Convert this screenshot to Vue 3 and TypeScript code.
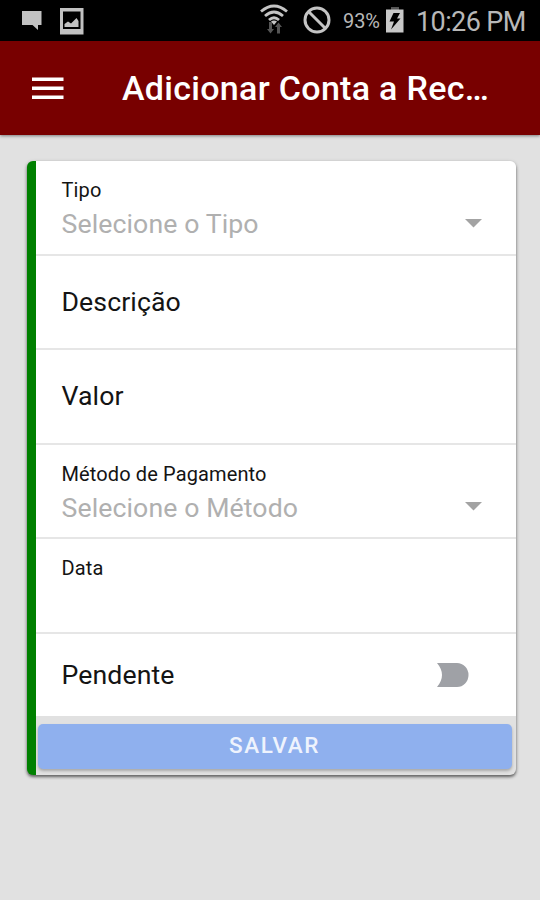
<script setup lang="ts">
import { ref } from 'vue'

interface Field {
  id: string
  label: string
  placeholder?: string
  kind: 'select' | 'text' | 'date'
}

const fields: Field[] = [
  { id: 'tipo', label: 'Tipo', placeholder: 'Selecione o Tipo', kind: 'select' },
  { id: 'descricao', label: 'Descrição', kind: 'text' },
  { id: 'valor', label: 'Valor', kind: 'text' },
  { id: 'metodo', label: 'Método de Pagamento', placeholder: 'Selecione o Método', kind: 'select' },
  { id: 'data', label: 'Data', kind: 'date' },
]

const pending = ref<boolean>(false)
</script>

<template>
  <div class="screen">
    <div class="status">
      <svg class="chat" width="20" height="20" viewBox="0 0 20 20">
        <path d="M0 0H19.5V14H16V19L10.5 14H0Z" fill="#c2c2c2" />
      </svg>
      <svg class="photo" width="24" height="28" viewBox="0 0 24 28">
        <path fill-rule="evenodd" d="M0 0H23.5V26.500H0ZM3 3.5V21H20.5V3.5Z" fill="#c2c2c2" />
        <path d="M4.5 19V16L8 13.5L11 15.5L16.5 10L18.5 13V19Z" fill="#c2c2c2" />
      </svg>
      <span class="spacer"></span>
      <svg class="wifi" width="28" height="31" viewBox="0 0 28 31">
        <g fill="none" stroke="#c4c4c4" stroke-width="2.8">
          <path d="M1 7.5Q14-3.500 27 7.5" />
          <path d="M5 12Q14 4 23 12" />
          <path d="M9 16Q14 11.5 19 16" />
        </g>
        <path d="M11 17.5Q14 15.5 17 17.5L14 21Z" fill="#c4c4c4" />
        <path d="M9 18H12V25H14L10.500 29.500L7 25H9ZM17 29.500V23H15L18.500 18.500L22 23H20V29.500Z" fill="#555" />
      </svg>
      <svg class="block" width="28" height="28" viewBox="0 0 28 28">
        <g fill="none" stroke="#c4c4c4" stroke-width="3">
          <circle cx="14" cy="14" r="12" />
          <path d="M5.500 5.500L22.500 22.500" />
        </g>
      </svg>
      <span class="percent">93%</span>
      <svg class="battery" width="18" height="26" viewBox="0 0 18 26">
        <path d="M5 0H13V3H5Z" fill="#555" />
        <path d="M0 2.500H17.500V25.500H0Z" fill="#c8c8c8" />
        <path d="M7.500 6H14L11 11.500H14.500L5 22.500L8 14.500H3.500Z" fill="#000" />
      </svg>
      <span class="clock">10:26 PM</span>
    </div>

    <header class="toolbar">
      <button class="menu" type="button">
        <svg width="32" height="23" viewBox="0 0 32 23">
          <path d="M0 .5H31.500V4H0ZM0 9.500H31.500V13H0ZM0 18.500H31.500V22H0Z" fill="#fff" />
        </svg>
      </button>
      <h1 class="title"><span>Adicionar Conta a Rec…</span></h1>
    </header>

    <main class="content">
      <form class="card" @submit.prevent>
        <div v-for="field in fields" :key="field.id" class="row" :class="field.kind">
          <span class="label">{{ field.label }}</span>
          <div v-if="field.placeholder" class="choice">
            <span class="placeholder">{{ field.placeholder }}</span>
            <svg width="17" height="9" viewBox="0 0 17 9"><path d="M0 0H17L8.500 8.500Z" fill="#a3a3a3" /></svg>
          </div>
        </div>
        <div class="row toggle-row" @click="pending = !pending">
          <span class="label">Pendente</span>
          <svg class="toggle" width="32" height="24" viewBox="0 0 32 24">
            <path d="M0 0H20A11.500 12 0 0 1 20 24H0Q10 12 0 0Z" fill="#9fa1a6" />
          </svg>
        </div>
        <div class="actions">
          <button class="save" type="submit"><span>SALVAR</span></button>
        </div>
      </form>
    </main>
  </div>
</template>

<style>
body {
  margin: 0;
  background: #e1e1e1;
}
</style>

<style scoped>
.screen {
  box-sizing: border-box;
  width: 540px;
  height: 900px;
  display: flex;
  flex-direction: column;
  overflow: hidden;
  background: #e1e1e1;
  font-family: Roboto, "Liberation Sans", sans-serif;
  color: #141414;
}
.status {
  flex: none;
  height: 41px;
  display: flex;
  align-items: flex-start;
  background: #000;
  color: #b8b8b8;
  white-space: nowrap;
}
.status svg {
  flex: none;
}
.chat {
  margin: 11px 0 0 21.500px;
}
.photo {
  margin: 7.500px 0 0 18.500px;
}
.spacer {
  flex: 1;
}
.wifi {
  margin: 4px 15px 0 0;
}
.block {
  margin: 6px 12px 0 0;
}
.percent {
  width: 37px;
  margin-top: 8px;
  font-size: 20px;
  line-height: 26px;
  letter-spacing: -0.100px;
}
.battery {
  margin: 7px 12px 0 6px;
}
.clock {
  width: 124px;
  margin-top: 6px;
  font-size: 27px;
  line-height: 32px;
  letter-spacing: -0.600px;
}
.toolbar {
  flex: none;
  box-sizing: border-box;
  height: 94px;
  display: flex;
  align-items: center;
  padding-left: 32px;
  background: #780000;
  box-shadow: 0 1px 3px rgba(0, 0, 0, 0.45);
}
.menu {
  display: flex;
  padding: 0;
  border: 0;
  background: none;
}
.title {
  margin: 0 0 0 58px;
  color: #fff;
  font-size: 34px;
  line-height: 40px;
  font-weight: 500;
  letter-spacing: 0.300px;
  white-space: nowrap;
}
.content {
  padding: 26px 24px 0 27px;
}
.card {
  box-sizing: border-box;
  height: 614px;
  border-left: 9px solid #008000;
  border-radius: 6px;
  overflow: hidden;
  background: #e1e1e1;
  box-shadow: 0 2px 3px rgba(0, 0, 0, 0.5), 0 1px 4px rgba(0, 0, 0, 0.16);
}
.row {
  box-sizing: border-box;
  height: 94.500px;
  display: flex;
  flex-direction: column;
  padding: 0 34px 0 25.500px;
  border-bottom: 2px solid #e6e6e6;
  background: #fff;
}
.row .label {
  font-size: 26.670px;
  line-height: 32px;
  letter-spacing: 0.100px;
}
.text {
  justify-content: center;
}
.select .label,
.date .label {
  padding-top: 17px;
  font-size: 20px;
  line-height: 24px;
  letter-spacing: 0.120px;
}
.choice {
  display: flex;
  justify-content: space-between;
  align-items: center;
  margin-top: 6px;
  color: #b0b0b0;
  font-size: 26.670px;
  line-height: 32px;
  letter-spacing: 0.100px;
}
.choice svg {
  margin-bottom: 2px;
}
.toggle-row {
  height: 82.500px;
  flex-direction: row;
  align-items: center;
  justify-content: space-between;
  padding-right: 47px;
  border-bottom: 0;
}
.actions {
  padding: 8px 4px 0 2px;
}
.save {
  box-sizing: border-box;
  width: 100%;
  height: 45px;
  display: flex;
  align-items: center;
  justify-content: center;
  padding: 0 1px 3px 0;
  border: 0;
  border-radius: 5px;
  background: #8fb0ee;
  box-shadow: 0 2px 3px rgba(0, 0, 0, 0.25);
  color: #eef3fd;
  font-family: inherit;
  font-size: 22.500px;
  font-weight: 500;
  letter-spacing: 1.600px;
}
</style>
